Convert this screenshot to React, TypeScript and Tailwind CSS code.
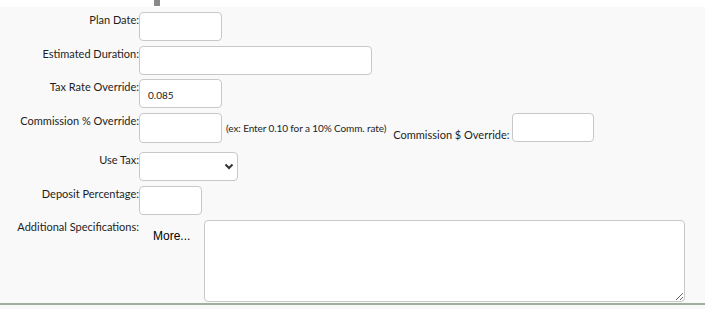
import React from 'react'

const inputCls = 'h-[29px] rounded-[4px] border border-[#c8c8c8] bg-white px-2 text-[10px] text-[#222] outline-none'

function Row({ label, children, className = '' }: { label: string; children: React.ReactNode; className?: string }) {
  return (
    <div className={`flex items-start ${className}`}>
      <div className="w-[139px] shrink-0 pt-[1px] text-right leading-[14px]">{label}</div>
      {children}
    </div>
  )
}

export default function App() {
  return (
    <div className="w-[705px] h-[309px] bg-white text-[11px] text-[#1e1e1e]" style={{ fontFamily: 'Lato, "Open Sans", sans-serif' }}>
      {/* top strip */}
      <div className="h-[7px] bg-white pl-[154px]">
        <div className="h-[6px] w-[6px] bg-[#888]" />
      </div>

      {/* form panel */}
      <div className="h-[298px] bg-[#f9f9f9] border-b-2 border-[#a2ad9f] pt-[5px] flex flex-col">
        <Row label="Plan Date:">
          <input className={`${inputCls} w-[83px]`} />
        </Row>
        <Row label="Estimated Duration:" className="mt-[5px]">
          <input className={`${inputCls} w-[233px]`} />
        </Row>
        <Row label="Tax Rate Override:" className="mt-[4px]">
          <input className={`${inputCls} w-[83px] pt-[3px]`} defaultValue="0.085" />
        </Row>
        <Row label="Commission % Override:" className="mt-[5px]">
          <input className={`${inputCls} w-[83px] h-[30px]`} />
          <span className="ml-[4px] mt-[8px] text-[10px] leading-[14px] tracking-[-0.1px]">(ex: Enter 0.10 for a 10% Comm. rate)</span>
          <span className="ml-[7px] mt-[15px] leading-[14px]">Commission $ Override:</span>
          <input className={`${inputCls} w-[82px] ml-[2px]`} />
        </Row>
        <Row label="Use Tax:" className="mt-[9px]">
          <div className="relative">
            <select className={`${inputCls} w-[99px] appearance-none`} />
            <svg className="pointer-events-none absolute right-[4px] top-[11px]" width="10" height="7" viewBox="0 0 10 7">
              <path d="M1.5 1.5 L5 5 L8.5 1.5" fill="none" stroke="#333" strokeWidth="2" />
            </svg>
          </div>
        </Row>
        <Row label="Deposit Percentage:" className="mt-[5px]">
          <input className={`${inputCls} w-[63px]`} />
        </Row>
        <div className="flex items-start mt-[4px]">
          <div className="w-[139px] shrink-0 pt-[1px] text-right leading-[14px]">Additional Specifications:</div>
          <span className="ml-[14px] mt-[8px] text-[12px] text-black" style={{ fontFamily: '"Liberation Sans", Arial, sans-serif' }}>More...</span>
          <textarea className="ml-[14px] mt-[1px] h-[82px] w-[481px] rounded-[4px] border border-[#c8c8c8] bg-white outline-none" />
        </div>
      </div>
      <div className="h-[4px] bg-[#f8f8f8]" />
    </div>
  )
}
